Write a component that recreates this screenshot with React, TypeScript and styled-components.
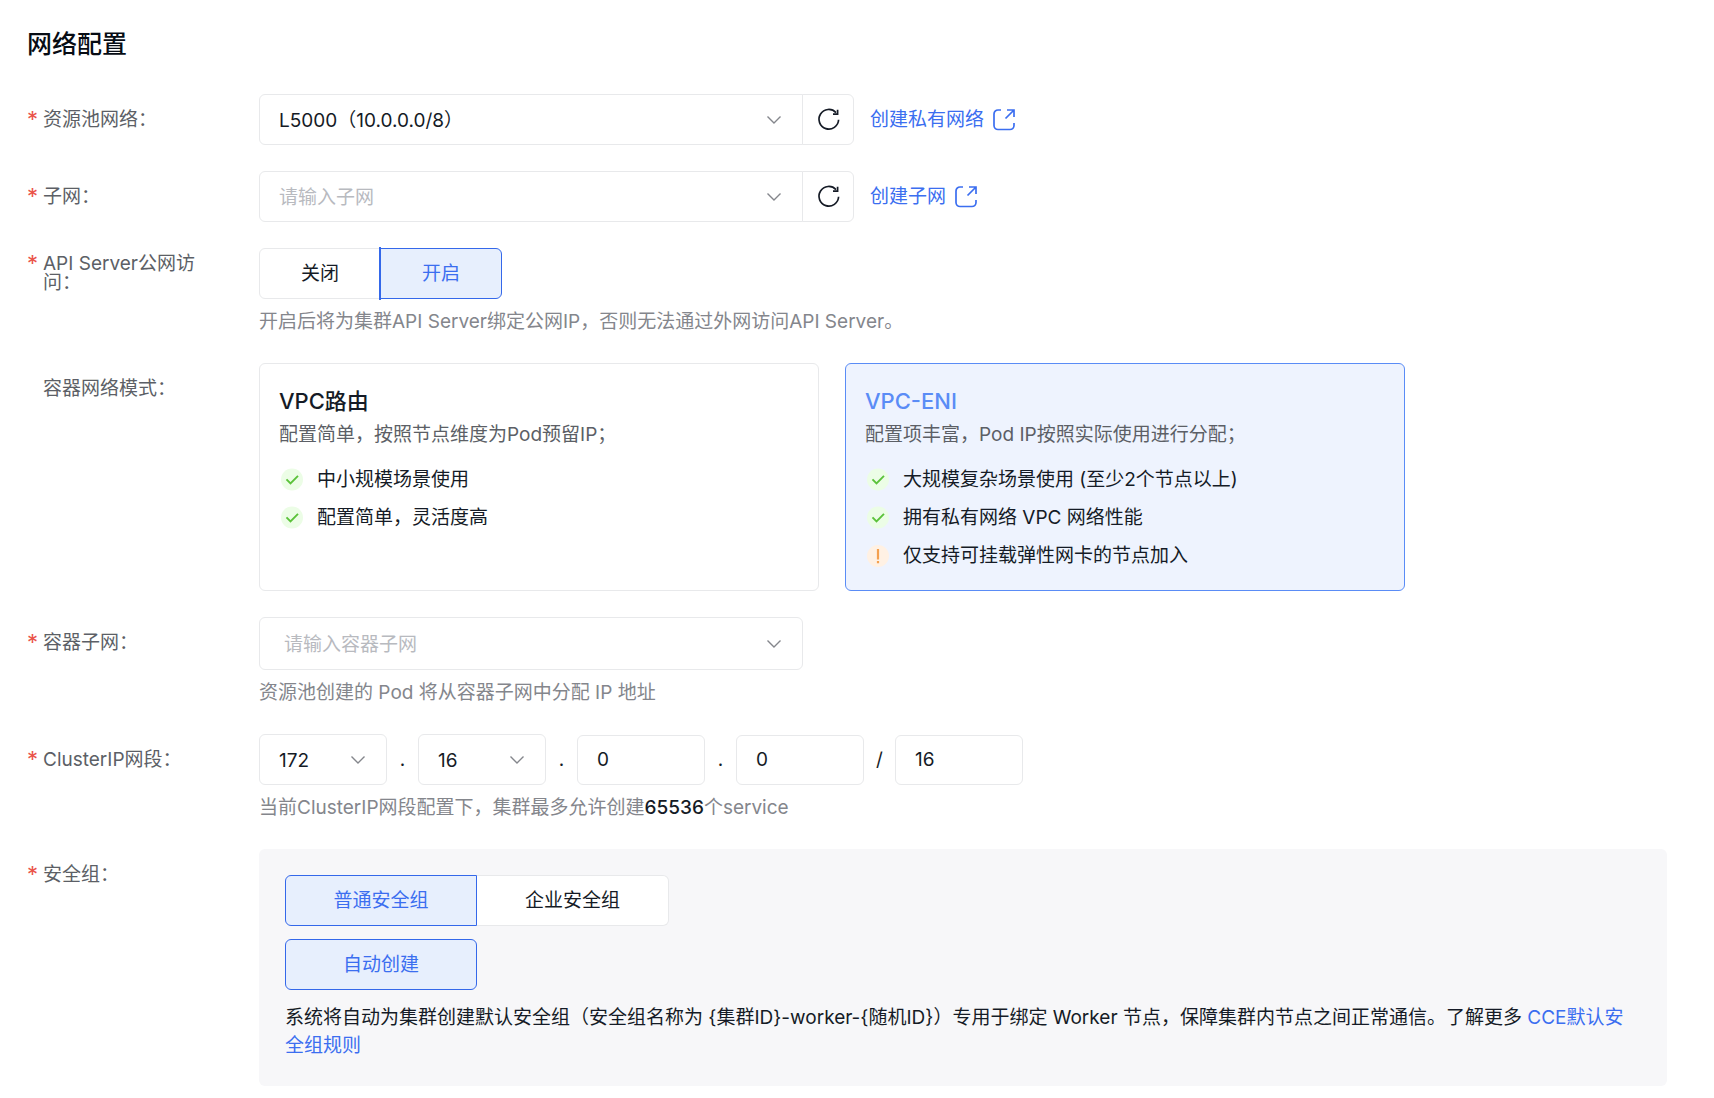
import React, { useState } from "react";
import styled, { createGlobalStyle, css } from "styled-components";

const color = {
  text: "#151b26",
  label: "#5c5f66",
  hint: "#84868c",
  placeholder: "#b8babf",
  line: "#e8e9eb",
  primary: "#3468ea",
  primaryText: "#3b6ef0",
  primarySoft: "#e7effd",
  cardLine: "#5a8cf6",
  cardSoft: "#eef3fe",
  panel: "#f7f7f9",
  danger: "#ea5349",
};

const GlobalStyle = createGlobalStyle`
  *, *::before, *::after { box-sizing: border-box; }
  body {
    margin: 0;
    background: #fff;
    color: ${color.text};
    font-family: Inter, "Noto Sans CJK SC", sans-serif;
    font-size: 19px;
    line-height: 28px;
  }
  button, input, select { font: inherit; color: inherit; }
`;

const Page = styled.main`
  padding: 24px 47px 10px 27px;
`;

const Title = styled.h2`
  margin: 0 0 30px;
  font-size: 25px;
  font-weight: 500;
  line-height: 40px;
  color: #070c14;
`;

const Form = styled.form`
  display: flex;
  flex-direction: column;
  gap: 26px;
`;

const Row = styled.div`
  display: grid;
  grid-template-columns: 232px minmax(0, 1fr);
  align-items: start;
`;

const LabelBox = styled.div`
  display: flex;
  align-items: center;
  height: 50px;
  padding-right: 48px;
  line-height: 19px;
  color: ${color.label};
`;

const Star = styled.span`
  flex: 0 0 16px;
  font-size: 22px;
  color: ${color.danger};
`;

const LabelLine = styled.div`
  display: flex;
  align-items: flex-start;
`;

const Hint = styled.p`
  margin: 8px 0 0;
  line-height: 30px;
  color: ${color.hint};

  b {
    font-weight: 500;
    color: ${color.text};
  }
`;

const Inline = styled.div`
  display: flex;
  align-items: center;
`;

const SelectBox = styled.div<{ $width: number; $joined?: boolean }>`
  position: relative;
  width: ${(p) => p.$width}px;

  select {
    border-radius: ${(p) => (p.$joined ? "6px 0 0 6px" : "6px")};
  }
`;

const fieldStyle = css`
  display: block;
  width: 100%;
  border: 1px solid ${color.line};
  border-radius: 6px;
  background: #fff;
  outline: none;
`;

const NativeSelect = styled.select<{ $empty?: boolean; $large?: boolean }>`
  ${fieldStyle}
  height: ${(p) => (p.$large ? 53 : 51)}px;
  padding: 2px 44px 0 ${(p) => (p.$large ? 24 : 19)}px;
  appearance: none;
  color: ${(p) => (p.$empty ? color.placeholder : color.text)};
`;

const Arrow = styled.svg`
  position: absolute;
  top: 50%;
  right: 21px;
  width: 16px;
  height: 16px;
  margin-top: -8px;
  color: ${color.hint};
  pointer-events: none;
`;

const TextBox = styled.input`
  ${fieldStyle}
  width: 128px;
  height: 50px;
  padding: 0 19px;
`;

const Separator = styled.span`
  width: 31px;
  text-align: center;
`;

const IconButton = styled.button`
  display: flex;
  align-items: center;
  justify-content: center;
  width: 52px;
  height: 51px;
  margin-left: -1px;
  padding: 0;
  border: 1px solid ${color.line};
  border-radius: 0 6px 6px 0;
  background: #fff;
  cursor: pointer;
`;

const Link = styled.a`
  color: ${color.primaryText};
  text-decoration: none;
`;

const CreateLink = styled(Link)`
  display: flex;
  align-items: center;
  gap: 9px;
  margin-left: 16px;
`;

const Segments = styled.div`
  display: flex;
`;

const Segment = styled.button<{ $width: number; $active?: boolean; $bar?: boolean }>`
  position: relative;
  z-index: ${(p) => (p.$active ? 1 : 0)};
  width: ${(p) => p.$width}px;
  height: 51px;
  padding: 0;
  border: 1px solid ${(p) => (p.$active ? color.primary : color.line)};
  background: ${(p) => (p.$active ? color.primarySoft : "#fff")};
  color: ${(p) => (p.$active ? color.primaryText : color.text)};
  cursor: pointer;

  &:not(:first-child) {
    margin-left: ${(p) => (p.$bar ? "-1px" : "0")};
    border-left-width: ${(p) => (p.$bar || p.$active ? "1px" : "0")};
  }
  &:first-child { border-top-left-radius: 6px; border-bottom-left-radius: 6px; }
  &:last-child { border-top-right-radius: 6px; border-bottom-right-radius: 6px; }

  ${(p) =>
    p.$bar &&
    p.$active &&
    css`
      &:not(:first-child)::before {
        content: "";
        position: absolute;
        inset: -2px auto -2px -2px;
        width: 2px;
        background: ${color.primary};
      }
    `}
`;

const Cards = styled.div`
  display: flex;
  gap: 26px;
`;

const Card = styled.button<{ $active?: boolean }>`
  display: flex;
  flex-direction: column;
  flex: 0 1 560px;
  min-height: 228px;
  padding: 20px 19px 18px;
  border: 1px solid ${(p) => (p.$active ? color.cardLine : color.line)};
  border-radius: 6px;
  background: ${(p) => (p.$active ? color.cardSoft : "#fff")};
  text-align: left;
  cursor: pointer;
`;

const CardTitle = styled.span<{ $active?: boolean }>`
  font-size: 22px;
  font-weight: 500;
  line-height: 34px;
  color: ${(p) => (p.$active ? color.cardLine : color.text)};
`;

const CardText = styled.span`
  margin-bottom: 4px;
  line-height: 34px;
  color: ${color.label};
`;

const Feature = styled.span`
  display: flex;
  align-items: center;
  gap: 12px;
  margin-top: 10px;
  line-height: 28px;
`;

const Badge = styled.svg`
  flex: none;
  width: 26px;
  height: 26px;
`;

const Panel = styled.section`
  display: flex;
  flex-direction: column;
  gap: 13px;
  padding: 26px 32px 26px 26px;
  border-radius: 6px;
  background: ${color.panel};
`;

const PanelText = styled.p`
  margin: 1px 0 0;
`;

const ChevronIcon = () => (
  <Arrow viewBox="0 0 16 16" fill="none" stroke="currentColor" strokeWidth="1.4" aria-hidden="true">
    <path d="M1.5 4.5 8 11l6.5-6.5" />
  </Arrow>
);

const RefreshIcon = () => (
  <svg width="26" height="26" viewBox="0 0 26 26" fill="none" stroke={color.text} strokeWidth="1.7" aria-hidden="true">
    <path d="M23.6 12.8A9.8 9.8 0 1 1 21 5.6" />
    <path d="M22.6 2.8v4.4h-4.6" />
  </svg>
);

const ExternalIcon = () => (
  <svg width="22" height="22" viewBox="0 0 22 22" fill="none" stroke={color.primaryText} strokeWidth="1.7" aria-hidden="true">
    <path d="M8 1H5a4 4 0 0 0-4 4V16.5a4 4 0 0 0 4 4h12a4 4 0 0 0 4-4v-2.5" />
    <path d="M14 1h7v7M21 1l-8.5 8.5" />
  </svg>
);

const CheckBadge = () => (
  <Badge viewBox="0 0 26 26" fill="none" aria-hidden="true">
    <circle cx="13" cy="12.5" r="11" fill="#ecfde6" />
    <path d="M7.5 12.3l4 4 7.5-7.5" stroke="#5bc23a" strokeWidth="1.9" />
  </Badge>
);

const WarnBadge = () => (
  <Badge viewBox="0 0 26 26" fill="none" aria-hidden="true">
    <circle cx="13" cy="13" r="11" fill="#fff1e4" />
    <path d="M13 6v10.5M13 18v2.2" stroke="#f4a04f" strokeWidth="2.2" />
  </Badge>
);

type FieldProps = {
  label: string;
  htmlFor?: string;
  optional?: boolean;
  children: React.ReactNode;
};

const Field = ({ label, htmlFor, optional, children }: FieldProps) => (
  <Row>
    <LabelBox>
      <LabelLine>
        <Star aria-hidden="true">{optional ? "" : "*"}</Star>
        {htmlFor ? <label htmlFor={htmlFor}>{label}</label> : <span>{label}</span>}
      </LabelLine>
    </LabelBox>
    <div>{children}</div>
  </Row>
);

type DropdownProps = {
  id?: string;
  label?: string;
  width: number;
  options: string[];
  placeholder?: string;
  joined?: boolean;
  large?: boolean;
};

const Dropdown = ({ id, label, width, options, placeholder, joined, large }: DropdownProps) => {
  const [value, setValue] = useState(placeholder ? "" : options[0]);
  return (
    <SelectBox $width={width} $joined={joined}>
      <NativeSelect
        id={id}
        aria-label={label}
        value={value}
        $empty={!value}
        $large={large}
        onChange={(e) => setValue(e.target.value)}
      >
        {placeholder && (
          <option value="" disabled>
            {placeholder}
          </option>
        )}
        {options.map((o) => (
          <option key={o}>{o}</option>
        ))}
      </NativeSelect>
      <ChevronIcon />
    </SelectBox>
  );
};

type ChoiceProps = {
  label: string;
  options: string[];
  initial: string;
  width: number;
  bar?: boolean;
};

const Choice = ({ label, options, initial, width, bar }: ChoiceProps) => {
  const [value, setValue] = useState(initial);
  return (
    <Segments role="group" aria-label={label}>
      {options.map((o) => (
        <Segment
          key={o}
          type="button"
          $width={width}
          $bar={bar}
          $active={o === value}
          aria-pressed={o === value}
          onClick={() => setValue(o)}
        >
          {o}
        </Segment>
      ))}
    </Segments>
  );
};

const modes = [
  {
    name: "VPC路由",
    text: "配置简单，按照节点维度为Pod预留IP；",
    features: ["中小规模场景使用", "配置简单，灵活度高"],
    warnings: [] as string[],
  },
  {
    name: "VPC-ENI",
    text: "配置项丰富，Pod IP按照实际使用进行分配；",
    features: ["大规模复杂场景使用 (至少2个节点以上)", "拥有私有网络 VPC 网络性能"],
    warnings: ["仅支持可挂载弹性网卡的节点加入"],
  },
];

const groupNote =
  "系统将自动为集群创建默认安全组（安全组名称为 {集群ID}-worker-{随机ID}）专用于绑定 Worker 节点，保障集群内节点之间正常通信。了解更多 ";

export default function App() {
  const [mode, setMode] = useState("VPC-ENI");

  return (
    <Page lang="zh-CN">
      <GlobalStyle />
      <Title>网络配置</Title>
      <Form onSubmit={(e) => e.preventDefault()}>
        <Field label="资源池网络：" htmlFor="network">
          <Inline>
            <Dropdown id="network" width={544} options={["L5000（10.0.0.0/8）"]} joined />
            <IconButton type="button" aria-label="刷新">
              <RefreshIcon />
            </IconButton>
            <CreateLink href="#network">
              创建私有网络
              <ExternalIcon />
            </CreateLink>
          </Inline>
        </Field>

        <Field label="子网：" htmlFor="subnet">
          <Inline>
            <Dropdown id="subnet" width={544} options={[]} placeholder="请输入子网" joined />
            <IconButton type="button" aria-label="刷新">
              <RefreshIcon />
            </IconButton>
            <CreateLink href="#subnet">
              创建子网
              <ExternalIcon />
            </CreateLink>
          </Inline>
        </Field>

        <Field label="API Server公网访问：">
          <Choice label="API Server公网访问" options={["关闭", "开启"]} initial="开启" width={122} bar />
          <Hint>开启后将为集群API Server绑定公网IP，否则无法通过外网访问API Server。</Hint>
        </Field>

        <Field label="容器网络模式：" optional>
          <Cards>
            {modes.map((m) => (
              <Card
                key={m.name}
                type="button"
                $active={m.name === mode}
                aria-pressed={m.name === mode}
                onClick={() => setMode(m.name)}
              >
                <CardTitle $active={m.name === mode}>{m.name}</CardTitle>
                <CardText>{m.text}</CardText>
                {m.features.map((f) => (
                  <Feature key={f}>
                    <CheckBadge />
                    {f}
                  </Feature>
                ))}
                {m.warnings.map((w) => (
                  <Feature key={w}>
                    <WarnBadge />
                    {w}
                  </Feature>
                ))}
              </Card>
            ))}
          </Cards>
        </Field>

        <Field label="容器子网：" htmlFor="pod-subnet">
          <Dropdown id="pod-subnet" width={544} options={[]} placeholder="请输入容器子网" large />
          <Hint>资源池创建的 Pod 将从容器子网中分配 IP 地址</Hint>
        </Field>

        <Field label="ClusterIP网段：" htmlFor="cluster-ip">
          <Inline>
            <Dropdown id="cluster-ip" width={128} options={["172", "10", "192"]} />
            <Separator>.</Separator>
            <Dropdown label="第二段" width={128} options={["16", "17", "18"]} />
            <Separator>.</Separator>
            <TextBox aria-label="第三段" defaultValue="0" />
            <Separator>.</Separator>
            <TextBox aria-label="第四段" defaultValue="0" />
            <Separator>/</Separator>
            <TextBox aria-label="掩码" defaultValue="16" />
          </Inline>
          <Hint>
            当前ClusterIP网段配置下，集群最多允许创建<b>65536</b>个service
          </Hint>
        </Field>

        <Field label="安全组：">
          <Panel>
            <Choice label="安全组类型" options={["普通安全组", "企业安全组"]} initial="普通安全组" width={192} />
            <Choice label="创建方式" options={["自动创建"]} initial="自动创建" width={192} />
            <PanelText>
              {groupNote}
              <Link href="#rules">CCE默认安全组规则</Link>
            </PanelText>
          </Panel>
        </Field>
      </Form>
    </Page>
  );
}
